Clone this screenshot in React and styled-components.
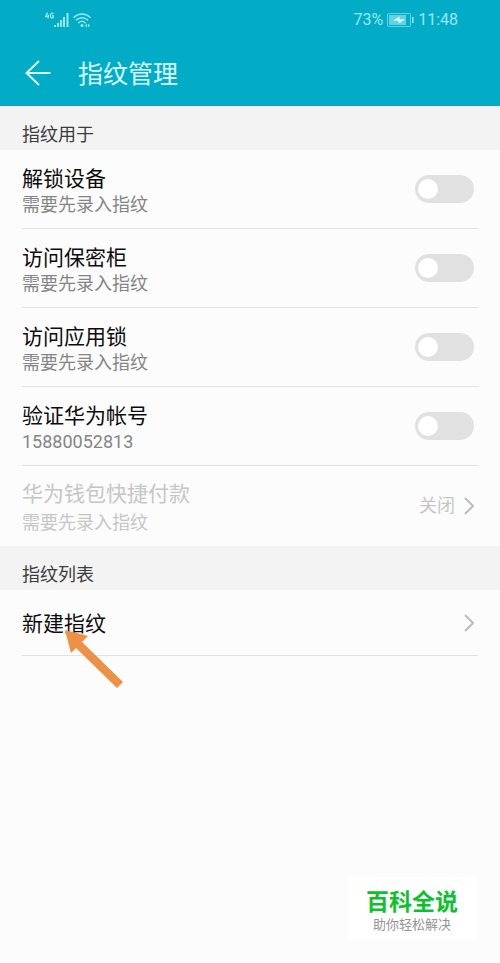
import React from "react";
import styled, { createGlobalStyle } from "styled-components";

const GlobalStyle = createGlobalStyle`
  * { box-sizing: border-box; }
  body {
    margin: 0;
    background: #fcfcfc;
    font-family: Roboto, "Noto Sans CJK SC", sans-serif;
  }
  h1, h2, p, ul { margin: 0; padding: 0; font-weight: 400; }
  ul { list-style: none; }
`;

const Page = styled.div`
  position: relative;
  min-height: 100vh;
  background: #fcfcfc;
`;

const Header = styled.header`
  background: #02acc6;
  border-bottom: 1px solid #1a9fb4;
`;

const StatusBar = styled.div`
  display: flex;
  align-items: center;
  justify-content: space-between;
  height: 40px;
  padding: 0 42px 0 45px;
  color: #98e8f2;
  font-size: 16px;
  line-height: 20px;
`;

const StatusGroup = styled.div`
  display: flex;
  align-items: center;
  gap: 4px;
`;

const TitleBar = styled.div`
  display: flex;
  align-items: center;
  gap: 27px;
  height: 65px;
  padding: 0 24px;
`;

const BackButton = styled.button`
  display: flex;
  padding: 0;
  border: 0;
  background: none;
  color: #d8fbff;
  cursor: pointer;
`;

const Title = styled.h1`
  padding-top: 4px;
  color: #d8fbff;
  font-size: 25px;
  line-height: 32px;
`;

const SectionTitle = styled.h2`
  display: flex;
  align-items: flex-end;
  height: 44px;
  padding: 0 22px 3px;
  background: #f3f3f3;
  color: #3c3c3c;
  font-size: 18px;
  line-height: 24px;
`;

const List = styled.ul`
  padding: 0 22px;
`;

const Row = styled.li`
  position: relative;
  display: flex;
  align-items: center;
  justify-content: space-between;
  min-height: ${(p) => p.$height || 79}px;
  padding-right: 4px;
  border-bottom: ${(p) => (p.$last ? "0" : "1px solid #e2e2e2")};
`;

const RowText = styled.div`
  display: flex;
  flex-direction: column;
  gap: ${(p) => p.$gap || 0}px;
  padding-top: 3px;
`;

const Label = styled.label`
  color: ${(p) => (p.$disabled ? "#c6c6c6" : "#0c0c0c")};
  font-size: 21px;
  line-height: 28px;
`;

const Hint = styled.p`
  color: ${(p) => (p.$disabled ? "#c6c6c6" : "#858585")};
  font-size: 18px;
  line-height: 24px;
`;

const Switch = styled.input`
  appearance: none;
  display: flex;
  align-items: center;
  flex: none;
  width: 59px;
  height: 28px;
  margin: 0;
  padding: 0 3px;
  border-radius: 14px;
  background: #e1e1e1;
  cursor: pointer;

  &::before {
    content: "";
    width: 20px;
    height: 20px;
    border-radius: 50%;
    background: #fff;
  }
  &:checked {
    justify-content: flex-end;
    background: #02acc6;
  }
`;

const LinkButton = styled.button`
  display: flex;
  flex: 1;
  align-items: center;
  justify-content: space-between;
  padding: 0;
  border: 0;
  background: none;
  color: #0c0c0c;
  font: inherit;
  font-size: 21px;
  line-height: 28px;
  text-align: left;
  cursor: pointer;
`;

const LinkText = styled.span`
  padding-top: 2px;
`;

const Value = styled.span`
  display: flex;
  align-items: center;
  gap: 9px;
  color: #c6c6c6;
  font-size: 18px;
  line-height: 24px;
`;

const Pointer = styled.svg`
  position: absolute;
  top: 38px;
  left: 42px;
  pointer-events: none;
`;

const Badge = styled.aside`
  position: absolute;
  right: 24px;
  bottom: 24px;
  padding: 13px 18px 5px 17px;
  background: #fff;
  text-align: center;
`;

const BadgeName = styled.p`
  color: #0cc22c;
  font-size: 23px;
  font-weight: 700;
  line-height: 26px;
`;

const BadgeSlogan = styled.p`
  color: #949494;
  font-size: 13px;
  line-height: 18px;
`;

const SignalIcon = () => (
  <svg width="24" height="16" viewBox="0 0 24 16" aria-label="4G">
    <g fill="none" stroke="currentColor" strokeWidth="1.3">
      <path d="M2.500 .5L.7 4.500H4M3.200 2.500v4" />
      <path d="M8.300 2C7.500.8 5.400 1 5.400 3.700S7.500 6.500 8.300 5.600V3.900H6.900" />
    </g>
    <path
      fill="currentColor"
      d="M9 13h2v2H9zM12 11h2v4h-2zM15 8h2v7h-2zM18 5h2v10h-2zM21.500 1h2v14h-2z"
    />
  </svg>
);

const WifiIcon = () => (
  <svg width="18" height="16" viewBox="0 0 18 16" aria-label="Wi-Fi">
    <g fill="none" stroke="currentColor" strokeWidth="1.5" strokeLinecap="round">
      <path d="M1 5.200C5.500.8 12.500.8 17 5.200" />
      <path d="M3.400 8C6.600 4.900 11.400 4.900 14.600 8" />
      <path d="M5.800 10.700C7.700 9 10.300 9 12.200 10.700" />
    </g>
    <circle cx="9" cy="13.500" r="1.500" fill="currentColor" />
    <path d="M14 11.500L12 13.500l2 2zM15 11.500l2 2-2 2z" fill="currentColor" />
  </svg>
);

const BatteryIcon = () => (
  <svg width="27" height="14" viewBox="0 0 27 14" aria-hidden="true">
    <rect x=".5" y=".5" width="23" height="13" rx="1.500" fill="none" stroke="#62d3e2" />
    <path d="M2 2h17v10H2z" fill="#62d3e2" />
    <path d="M6 7.500l6.500-4v2.800L18 6.500l-6.500 4V7.800z" fill="#e0fbff" />
    <path d="M25 4h1.500v6H25z" fill="#98e8f2" />
  </svg>
);

const BackIcon = () => (
  <svg width="27" height="26" viewBox="0 0 27 26" aria-hidden="true">
    <path
      d="M15 1L2.500 13 15 25M2.500 13H26.500"
      fill="none"
      stroke="currentColor"
      strokeWidth="2"
    />
  </svg>
);

const Chevron = () => (
  <svg width="10" height="18" viewBox="0 0 10 18" aria-hidden="true">
    <path d="M1 1l8 8-8 8" fill="none" stroke="#bcbcbc" strokeWidth="2" />
  </svg>
);

const switches = [
  { id: "unlock", label: "解锁设备", hint: "需要先录入指纹" },
  { id: "safe", label: "访问保密柜", hint: "需要先录入指纹" },
  { id: "applock", label: "访问应用锁", hint: "需要先录入指纹" },
  { id: "account", label: "验证华为帐号", hint: "15880052813" },
];

export default function App() {
  return (
    <Page>
      <GlobalStyle />
      <Header>
        <StatusBar>
          <StatusGroup>
            <SignalIcon />
            <WifiIcon />
          </StatusGroup>
          <StatusGroup>
            <span>73%</span>
            <BatteryIcon />
            <span>11:48</span>
          </StatusGroup>
        </StatusBar>
        <TitleBar>
          <BackButton aria-label="返回">
            <BackIcon />
          </BackButton>
          <Title>指纹管理</Title>
        </TitleBar>
      </Header>
      <main>
        <SectionTitle>指纹用于</SectionTitle>
        <List>
          {switches.map((item) => (
            <Row key={item.id}>
              <RowText>
                <Label htmlFor={item.id}>{item.label}</Label>
                <Hint>{item.hint}</Hint>
              </RowText>
              <Switch type="checkbox" role="switch" id={item.id} />
            </Row>
          ))}
          <Row $height={80} $last>
            <RowText $gap={3}>
              <Label as="p" $disabled>华为钱包快捷付款</Label>
              <Hint $disabled>需要先录入指纹</Hint>
            </RowText>
            <Value>
              关闭
              <Chevron />
            </Value>
          </Row>
        </List>
        <SectionTitle>指纹列表</SectionTitle>
        <List>
          <Row $height={66}>
            <LinkButton>
              <LinkText>新建指纹</LinkText>
              <Chevron />
            </LinkButton>
            <Pointer width="60" height="60" viewBox="0 0 60 60" aria-hidden="true">
              <path d="M1 2L24 8 18 14 59 54 53 60 12 20 7 25z" fill="#ec9145" />
            </Pointer>
          </Row>
        </List>
      </main>
      <Badge>
        <BadgeName>百科全说</BadgeName>
        <BadgeSlogan>助你轻松解决</BadgeSlogan>
      </Badge>
    </Page>
  );
}
